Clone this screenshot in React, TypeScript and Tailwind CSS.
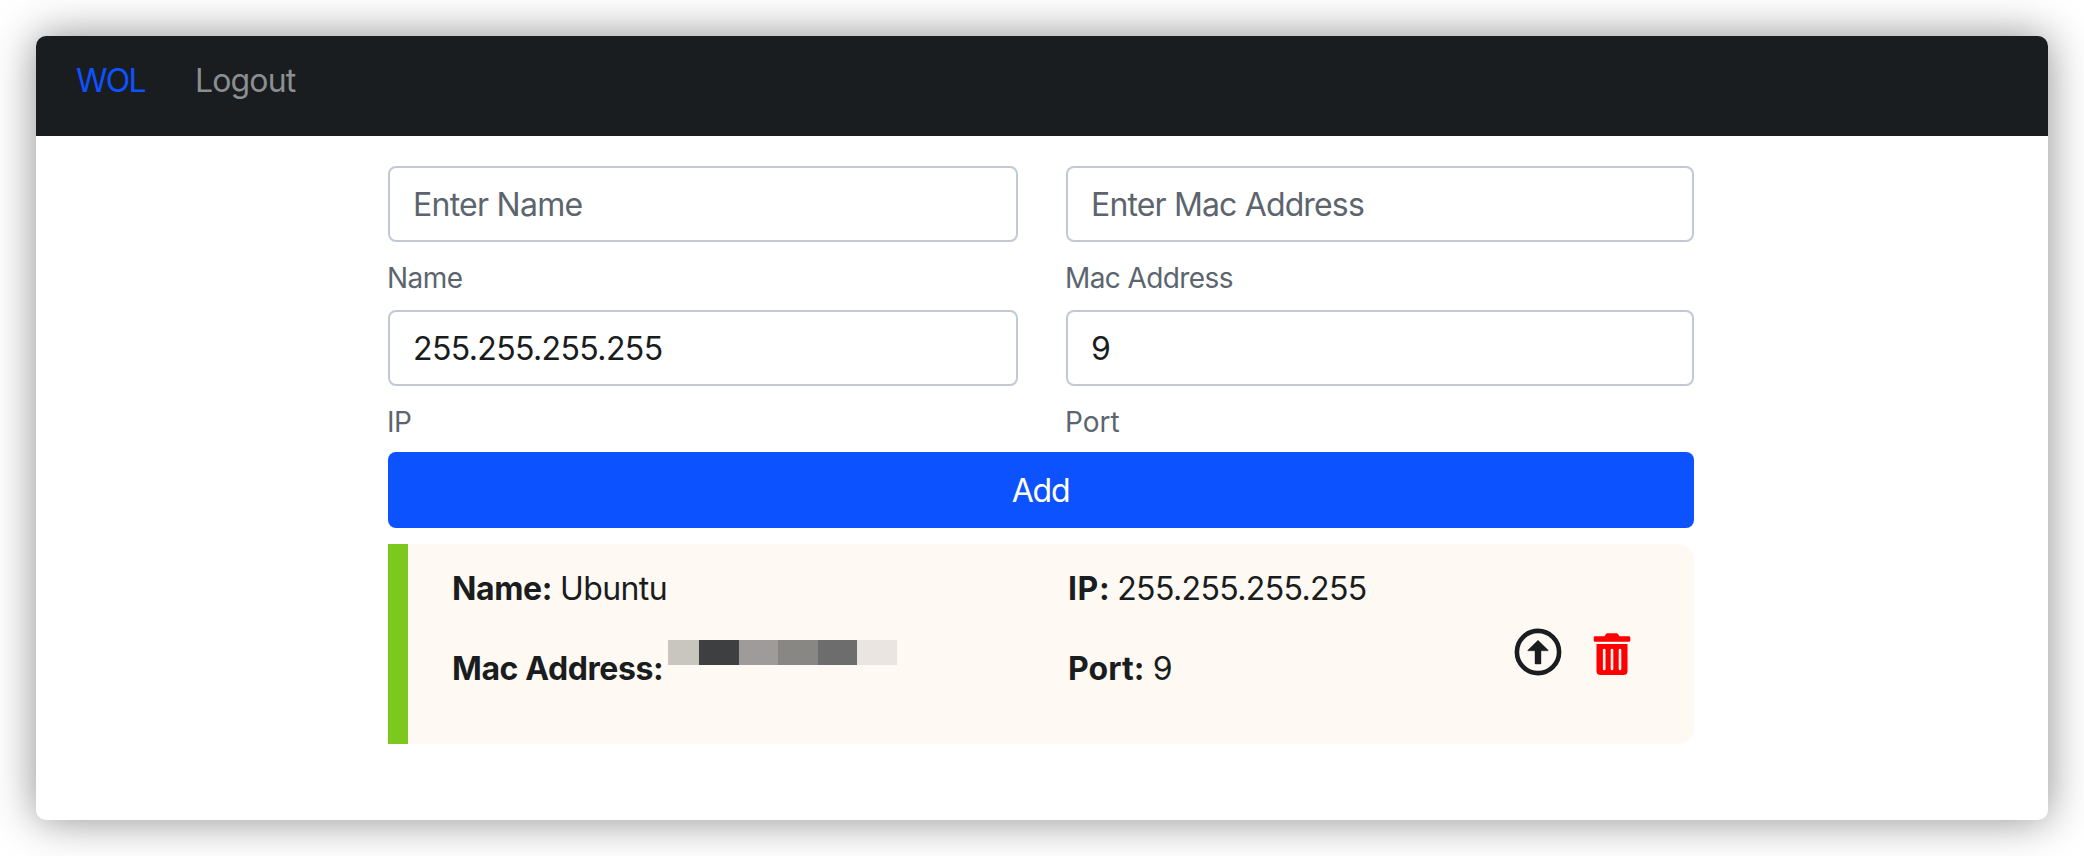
import type { ReactNode } from 'react';

function Field({ label, children, labelTracking }: { label: string; children: ReactNode; labelTracking: string }) {
  return (
    <label className="block h-[144px]">
      {children}
      <span className={`-ml-px block h-[42px] mt-[15px] text-[28px] leading-[42px] text-[#5c656d] ${labelTracking}`}>{label}</span>
    </label>
  );
}

const inputClass =
  'block w-full h-[76px] rounded-lg border-2 border-[#c3c9d3] bg-white px-[23px] text-[32px] leading-[48px] text-[#191d20] placeholder:text-[#5c656d] placeholder:opacity-100 outline-none';

function Detail({ term, tracking, children }: { term: string; tracking: string; children: ReactNode }) {
  return (
    <div className="flex h-[48px] mb-8 whitespace-nowrap">
      <span className={`font-bold ${tracking}`}>{term}</span>
      {children}
    </div>
  );
}

const maskCells = [
  'w-[31px] bg-[#c9c5bf]',
  'w-[40px] bg-[#3e3f41]',
  'w-[39px] bg-[#9f9b9a]',
  'w-[40px] bg-[#888784]',
  'w-[39px] bg-[#6d6d6d]',
  'w-[40px] bg-[#eae5e1]',
];

function ArrowUpCircle() {
  return (
    <svg width="48" height="48" viewBox="0 0 48 48" className="text-[#191d20]">
      <circle cx="24" cy="24" r="21.1" fill="none" stroke="currentColor" strokeWidth="4.6" />
      <path
        d="M24 12.2 34 22a.4.4 0 0 1-.3.8H27v12.6a.7.7 0 0 1-.7.7h-4.6a.7.7 0 0 1-.7-.7V22.800h-6.700a.4.4 0 0 1-.3-.8Z"
        fill="currentColor"
        stroke="currentColor"
        strokeWidth=".4"
        strokeLinejoin="round"
      />
    </svg>
  );
}

function Trash() {
  return (
    <svg width="38" height="44" viewBox="0 0 38 44" className="text-[#ff0000]" fill="currentColor">
      <path d="M2 4.200h9.500l1.300-2A2 2 0 0 1 14.500 1.300h9a2 2 0 0 1 1.700.9l1.300 2H36a1.300 1.300 0 0 1 1.300 1.300v3a1.300 1.300 0 0 1-1.300 1.300H2A1.300 1.300 0 0 1 .7 8.500v-3A1.300 1.300 0 0 1 2 4.200Z" />
      <path
        fillRule="evenodd"
        d="M3.500 12h31v27a4 4 0 0 1-4 4h-23a4 4 0 0 1-4-4ZM11.200 16.700a1.300 1.300 0 0 0-1.300 1.300v19a1.300 1.300 0 0 0 2.600 0V18a1.300 1.300 0 0 0-1.300-1.300ZM19 16.700a1.300 1.300 0 0 0-1.300 1.300v19a1.300 1.300 0 0 0 2.600 0V18a1.300 1.300 0 0 0-1.300-1.300ZM27 16.700a1.300 1.300 0 0 0-1.300 1.300v19a1.300 1.300 0 0 0 2.600 0V18a1.300 1.300 0 0 0-1.300-1.300Z"
      />
    </svg>
  );
}

export default function App() {
  return (
    <div className="h-[856px] w-[2084px] overflow-hidden bg-white p-9 font-['Inter',sans-serif] text-[32px] leading-[48px] font-[430] text-[#191d20]">
      <div className="h-[784px] overflow-hidden rounded-[10px] bg-white shadow-[0_0_44px_rgba(0,0,0,0.45)]">
        <nav className="flex h-[100px] bg-[#191d20] pt-[21px] pl-[40px]">
          <a className="w-[119px] tracking-[-1.7px] text-[#0d52ff]">WOL</a>
          <a className="tracking-[-0.86px] text-[#8c8e90]">Logout</a>
        </nav>
        <main className="ml-[352px] w-[1306px] pt-[30px]">
          <form>
            <div className="grid grid-cols-[630px_628px] gap-x-12">
              <Field label="Name" labelTracking="tracking-[-0.55px]">
                <input className={`${inputClass} tracking-[-0.73px]`} placeholder="Enter Name" />
              </Field>
              <Field label="Mac Address" labelTracking="tracking-[-0.6px]">
                <input className={`${inputClass} tracking-[-0.85px]`} placeholder="Enter Mac Address" />
              </Field>
              <Field label="IP" labelTracking="tracking-[-0.4px]">
                <input className={`${inputClass} tracking-[-0.62px]`} defaultValue="255.255.255.255" />
              </Field>
              <Field label="Port" labelTracking="tracking-normal">
                <input className={inputClass} defaultValue="9" />
              </Field>
            </div>
            <button type="button" className="mt-[-2px] block h-[76px] w-full rounded-lg bg-[#0d52ff] pt-0.5 pr-px tracking-[-1.3px] text-white">
              Add
            </button>
          </form>
          <section className="mt-4 flex h-[200px] rounded-r-2xl border-l-[20px] border-[#7cc81e] bg-[#fff9f3] pt-[21px] pl-[44px]">
            <div className="w-[616px]">
              <Detail term="Name:" tracking="tracking-[-0.4px]">
                <span className="ml-2 tracking-[-0.6px]">Ubuntu</span>
              </Detail>
              <Detail term="Mac Address:" tracking="tracking-[-0.4px]">
                <span className="mt-[-5px] ml-[5px] flex h-[25px]">
                  {maskCells.map((cell) => (
                    <span key={cell} className={cell} />
                  ))}
                </span>
              </Detail>
            </div>
            <div className="w-[446px]">
              <Detail term="IP:" tracking="tracking-[0.6px]">
                <span className="ml-[7px] tracking-[-0.62px]">255.255.255.255</span>
              </Detail>
              <Detail term="Port:" tracking="tracking-[0.1px]">
                <span className="ml-2">9</span>
              </Detail>
            </div>
            <div className="flex items-start gap-[31px] pt-[63px]">
              <button type="button" aria-label="Wake">
                <ArrowUpCircle />
              </button>
              <button type="button" aria-label="Delete" className="pt-1">
                <Trash />
              </button>
            </div>
          </section>
        </main>
      </div>
    </div>
  );
}
